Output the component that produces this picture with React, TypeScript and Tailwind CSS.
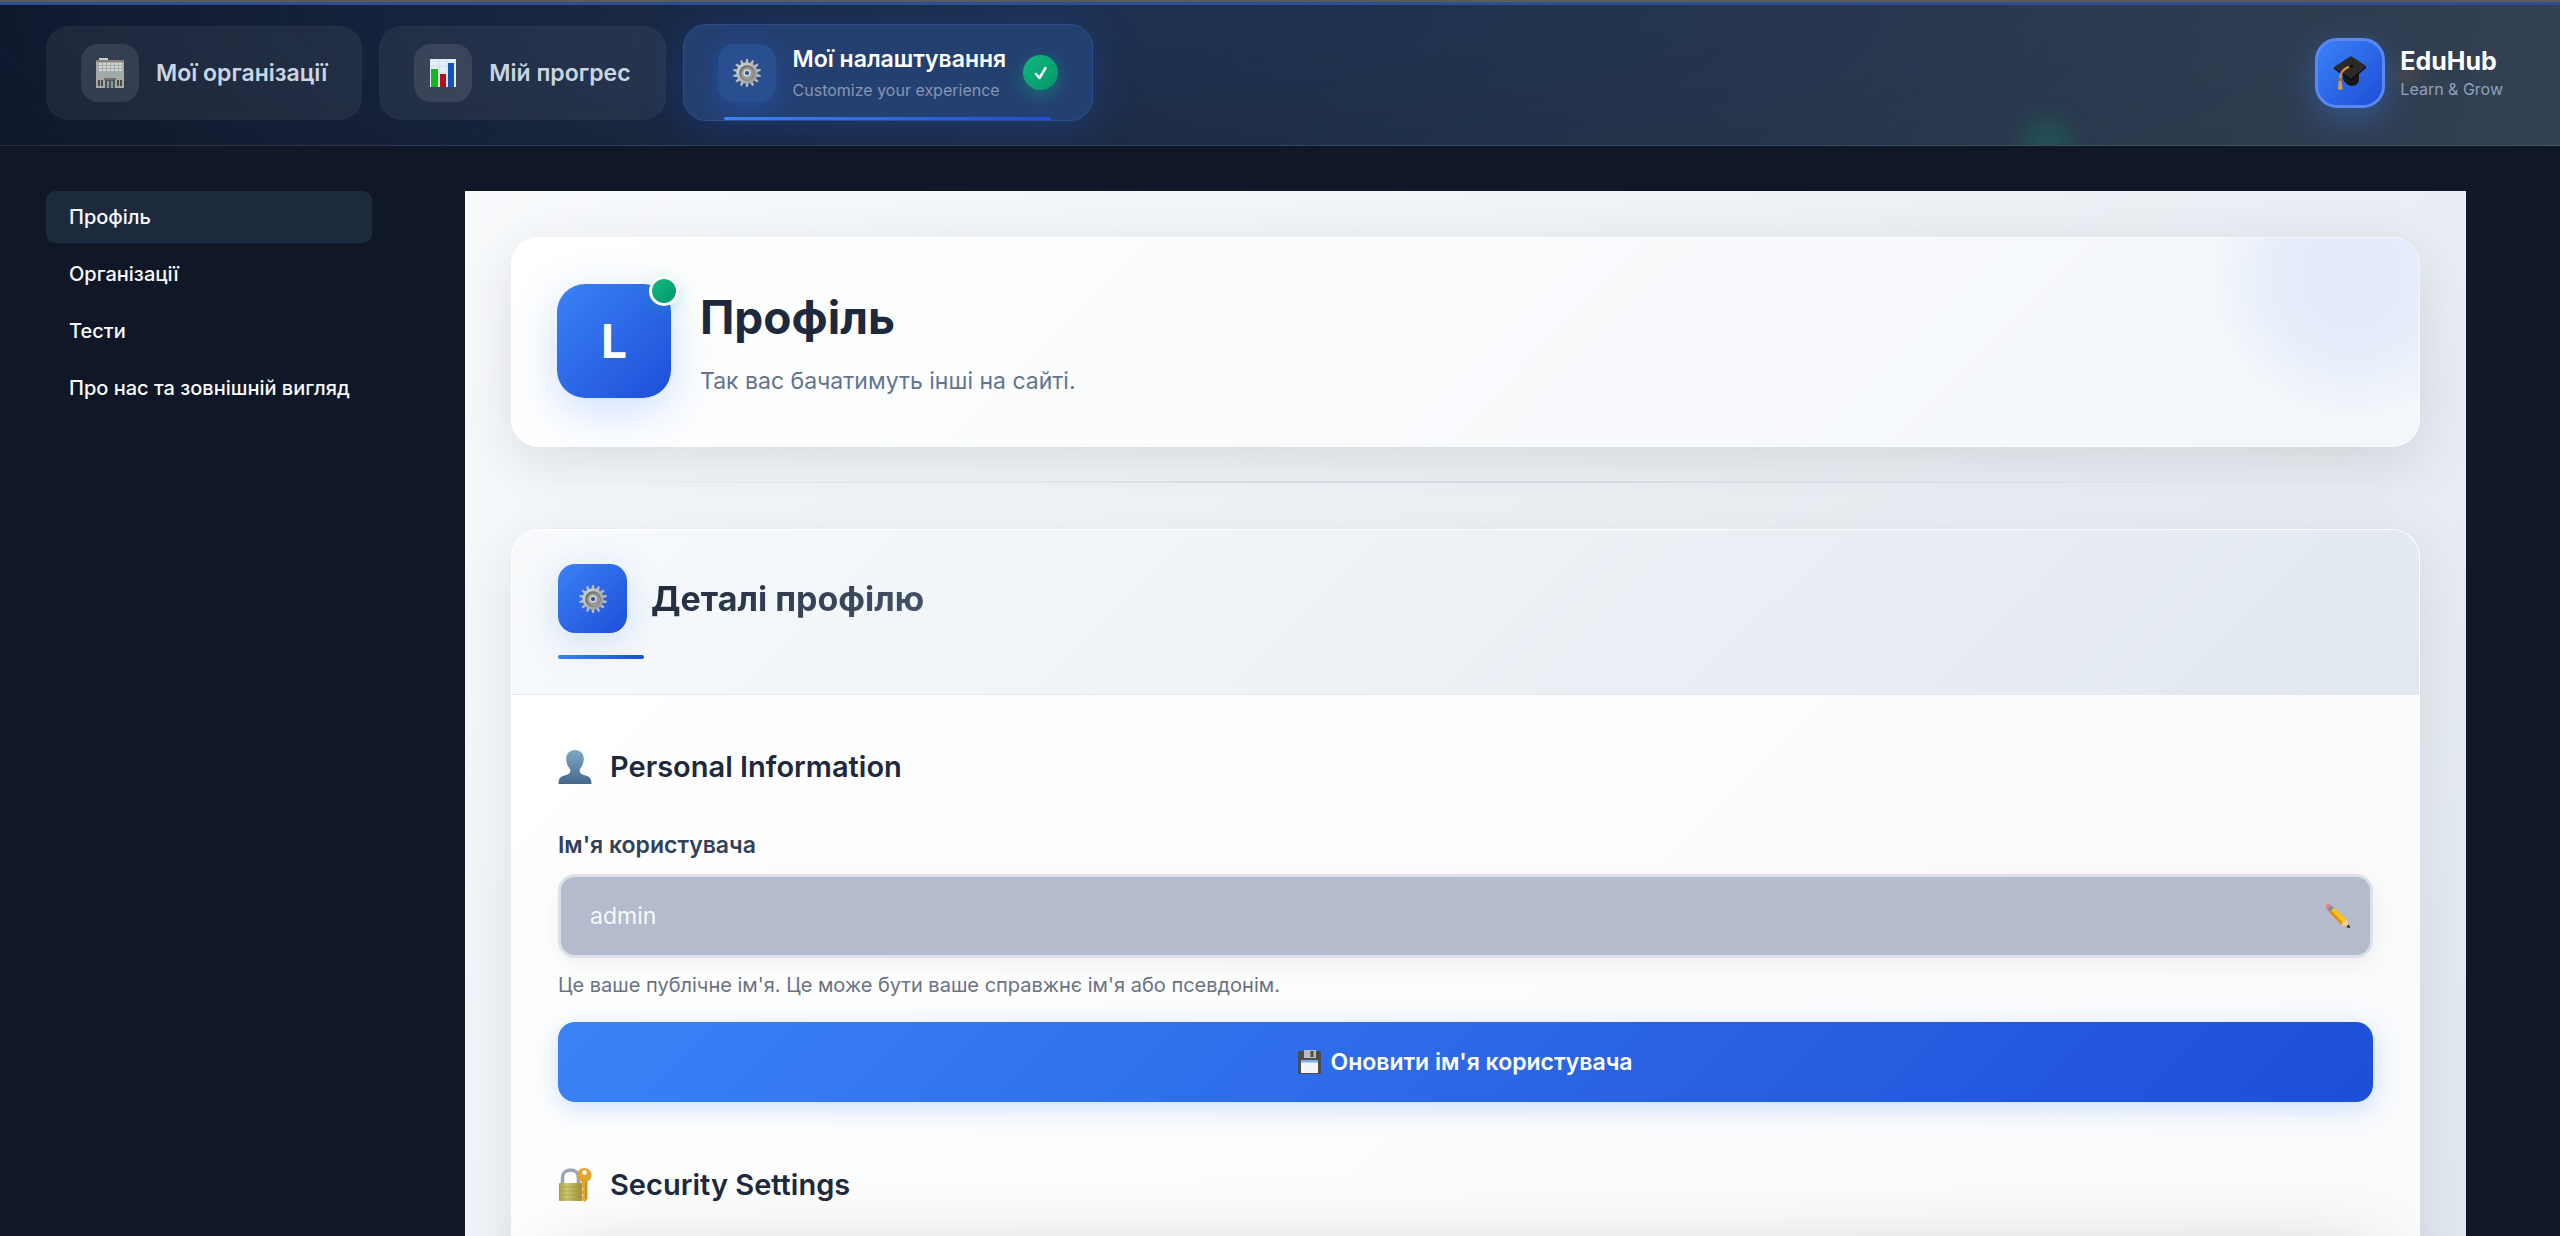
import type { ReactNode } from 'react';

function Building() {
  return (
    <svg viewBox="0 0 28 30" className="h-[30px] w-7" aria-hidden="true">
      <rect x="3" y="0" width="9" height="4" fill="#c9cccc" />
      <rect x="0" y="2" width="28" height="2" fill="#8d8078" />
      <rect x="0" y="4" width="28" height="26" fill="#a9aaa4" />
      {[5, 8, 11, 14, 17].map((y) =>
        [2, 6, 10, 14, 18, 22].map((x) => (
          <rect key={`${x}-${y}`} x={x + 1} y={y} width="3" height="2" fill={y < 13 ? '#c4dbe2' : '#93aab3'} />
        )),
      )}
      {[2, 5, 21, 24].map((x) => (
        <rect key={x} x={x} y="22" width="2" height="6" fill="#454a4c" />
      ))}
      <rect x="8" y="20" width="12" height="2" fill="#706d68" />
      <rect x="9" y="22" width="10" height="8" fill="#4b5555" />
      <rect x="11" y="23" width="2" height="7" fill="#8a9898" />
      <rect x="15" y="23" width="2" height="7" fill="#8a9898" />
    </svg>
  );
}

function BarChart() {
  return (
    <svg viewBox="0 0 26 28" className="h-7 w-[26px]" aria-hidden="true">
      <rect width="26" height="28" fill="#e3edf5" />
      <path d="M0 7h26M0 14h26M0 21h26M9 0v28M17 0v28" stroke="#d3dfe9" strokeWidth="1" />
      <rect x="1" y="10" width="7" height="18" fill="#14b81c" />
      <rect x="10" y="15" width="6" height="13" fill="#b80d1a" />
      <rect x="18" y="4" width="6" height="24" fill="#0d55bd" />
    </svg>
  );
}

function Gear() {
  const teeth = Array.from({ length: 14 }, (_, i) => (i * 360) / 14);
  return (
    <svg viewBox="0 0 28 28" className="size-7" aria-hidden="true">
      <defs>
        <linearGradient id="steel" x1="0" y1="0" x2="1" y2="1">
          <stop offset="0" stopColor="#d8d9d9" />
          <stop offset="1" stopColor="#8f908f" />
        </linearGradient>
      </defs>
      {teeth.map((a) => (
        <path key={a} d="M12.4 4.500 13 0h2l.6 4.500z" fill="#b8b9b9" transform={`rotate(${a} 14 14)`} />
      ))}
      <circle cx="14" cy="14" r="10.6" fill="url(#steel)" />
      <circle cx="14" cy="14" r="7.800" fill="#70716f" />
      <circle cx="14.500" cy="14.600" r="6.600" fill="#979896" />
      <circle cx="14" cy="14" r="3.800" fill="#d3d6d9" />
      <circle cx="14" cy="14" r="2.100" fill="#2f5193" />
    </svg>
  );
}

function GradCap() {
  return (
    <svg viewBox="0 0 34 34" className="size-[34px]" aria-hidden="true">
      <path d="M10 15v8c1 3 4 6 8 7 5 0 8-3 8-6v-9z" fill="#171716" />
      <path d="M18 0 1 11l17 12L33 10z" fill="#2b2a29" />
      <path d="M1 11v2l17 12 15-13v-2L18 23z" fill="#111" />
      <path d="M18 10C11 12 7 16 7 24" fill="none" stroke="#d9902f" strokeWidth="2.200" />
      <circle cx="7" cy="24" r="2" fill="#a86b22" />
      <path d="M6 25 5 33q2 1 4.500 0l-1-8z" fill="#e59a35" />
      <ellipse cx="18" cy="10.400" rx="2.200" ry="1.400" fill="#0b0b0b" />
    </svg>
  );
}

function Person() {
  return (
    <svg viewBox="0 0 34 34" className="size-[34px]" aria-hidden="true">
      <defs>
        <linearGradient id="bust" x1="0" y1="0" x2="0" y2="1">
          <stop offset="0" stopColor="#7fa8c6" />
          <stop offset="1" stopColor="#44688c" />
        </linearGradient>
      </defs>
      <path
        d="M17 0c5.500 0 9 3.800 8.800 9.300-.2 4.500-2 7.500-4 9.900-.6 3.400.8 5 5 6 4.500 1 6.700 3 6.700 8.800H.5c0-5.800 2.200-7.800 6.700-8.800 4.200-1 5.600-2.600 5-6-2-2.400-3.800-5.400-4-9.900C8 3.800 11.500 0 17 0z"
        fill="url(#bust)"
      />
    </svg>
  );
}

function LockKey() {
  return (
    <svg viewBox="0 0 34 34" className="size-[34px]" aria-hidden="true">
      <defs>
        <linearGradient id="brass" x1="0" y1="0" x2="1" y2="0">
          <stop offset="0" stopColor="#a89d4a" />
          <stop offset=".35" stopColor="#d2c872" />
          <stop offset="1" stopColor="#9a8a35" />
        </linearGradient>
      </defs>
      <path d="M4.500 16v-6c0-4.500 3-8 8-8s8 3.500 8 8v6" fill="none" stroke="#9aa6b3" strokeWidth="3.600" />
      <rect x="1" y="15" width="23" height="18" rx="1" fill="url(#brass)" />
      <path d="M1 19h23M1 23h23M1 27h23M1 31h23" stroke="#a59a4a" strokeWidth=".6" />
      <path d="M26 0c4.500 0 7.500 3 7.500 7 0 3-1.500 5.300-4 6.500V31l-2.500 3-3.500-2v-3l2-1.500-2-2v-3l2-1.500-2-2v-5.500c-2.500-1.200-4-3.500-4-6.500 0-4 2.500-7 6.500-7z" fill="#e3a52e" />
      <circle cx="26.500" cy="4.600" r="2.300" fill="#fff" />
      <path d="M28 14v17" stroke="#b67b1b" strokeWidth="1" />
    </svg>
  );
}

function Pencil() {
  return (
    <svg viewBox="0 0 26 26" className="size-[26px]" aria-hidden="true">
      <path d="M8.500 4.500 22 16.500 25.300 25 16.500 22.300 4 9z" fill="#fbc41c" />
      <path d="M4 9 16.500 22.300l2-2L6 7z" fill="#d9950f" />
      <path d="M22 16.500 25.300 25l-8.800-2.700c.8-2.800 2.700-4.800 5.500-5.800z" fill="#efcf9b" />
      <path d="m23.800 21.300 1.500 3.900-4.100-1.300z" fill="#2a2724" />
      <path d="M6 2.300 8.900 4.900 4.400 9.300 1.900 6.300z" fill="#84909c" />
      <path d="M5.800 2.200 2 6.300C.3 4.800.2 3 1.300 1.700 2.600.3 4.500.6 5.800 2.200z" fill="#f0807f" />
    </svg>
  );
}

function Floppy() {
  return (
    <svg viewBox="0 0 23 24" className="h-6 w-[23px]" aria-hidden="true">
      <path d="M0 1h22l1 1v22H1l-1-1z" fill="#4c4d50" />
      <rect x="6" y="0" width="12" height="8" fill="#b9bbbc" />
      <rect x="12.500" y="1" width="3" height="6" fill="#4c4d50" />
      <rect x="3" y="10" width="17" height="13" fill="#f3f5f7" />
      <rect x="3" y="10" width="17" height="2.500" fill="#79b2e6" />
    </svg>
  );
}

function Tab({ icon, label }: { icon: ReactNode; label: string }) {
  return (
    <a href="#" className="flex items-center gap-[17px] rounded-[23px] border border-white/[0.02] bg-white/[0.06] px-[34px] py-[17px]">
      <span className="flex size-[58px] items-center justify-center rounded-[17px] bg-white/10">{icon}</span>
      <span className="text-[23px] leading-[34px] font-semibold text-slate-300">{label}</span>
    </a>
  );
}

function SectionHeading({ icon, children }: { icon: ReactNode; children: ReactNode }) {
  return (
    <h3 className="flex items-center gap-[18px] text-[29px] leading-[48px] font-semibold text-slate-800">
      {icon}
      {children}
    </h3>
  );
}

const sideLinks = ['Профіль', 'Організації', 'Тести', 'Про нас та зовнішній вигляд'];

export default function App() {
  return (
    <div className="flex h-screen flex-col overflow-hidden bg-[#101726] font-['Inter','Noto_Sans',sans-serif]">
      <header className="relative flex shrink-0 items-center justify-between overflow-hidden border-b border-white/10 bg-[radial-gradient(ellipse_50%_180%_at_42%_10%,rgba(37,82,160,0.24),transparent),linear-gradient(100deg,#0f172a_0%,#1e293b_50%,#334155_100%)] py-6 pr-[57px] pl-[46px]">
        <div className="absolute inset-x-0 top-0 h-[5px] border-t-2 border-[#5a5a5f] bg-[#2c4f8f]" />
        <div className="absolute -bottom-6 left-[79%] size-[50px] rounded-full bg-emerald-500/20 blur-md" />
        <div className="absolute top-[62px] right-[140px] size-6 rounded-full bg-amber-600/15 blur-sm" />

        <nav className="relative flex items-center gap-[17px]">
          <Tab icon={<Building />} label="Мої організації" />
          <Tab icon={<BarChart />} label="Мій прогрес" />
          <a
            href="#"
            aria-current="page"
            className="relative flex items-center gap-[17px] rounded-[23px] border border-[#2d4f8e] bg-[#244071] px-[34px] py-[17px] shadow-[0_8px_44px_rgba(37,99,235,0.25)]"
          >
            <span className="flex size-[58px] items-center justify-center rounded-[17px] bg-[#2a4f91] shadow-[0_6px_24px_rgba(37,99,235,0.35)]">
              <Gear />
            </span>
            <span className="flex flex-col gap-px">
              <span className="text-[23px] leading-[34px] font-semibold text-white">Мої налаштування</span>
              <span className="text-[16px] leading-[26px] text-[#8795b3]">Customize your experience</span>
            </span>
            <span className="flex size-[35px] items-center justify-center rounded-full bg-[linear-gradient(135deg,#10b981,#059669)] shadow-[0_5px_16px_rgba(16,185,129,0.4)]">
              <svg viewBox="0 0 16 16" className="size-4" fill="none" stroke="#fff" strokeWidth="2.500" strokeLinecap="round" strokeLinejoin="round" aria-hidden="true">
                <path d="M3 9 6.500 13 12.500 3" />
              </svg>
            </span>
            <span className="absolute inset-x-[10%] bottom-0 h-[3px] rounded-full bg-[linear-gradient(90deg,#3b82f6,#1d4ed8)]" />
          </a>
        </nav>

        <a href="#" className="relative flex items-center gap-[15px]">
          <span className="flex size-[70px] items-center justify-center rounded-[22px] border-[3px] border-[#5a88f2] bg-[linear-gradient(135deg,#3b82f6,#1d4ed8)] shadow-[0_10px_34px_rgba(59,130,246,0.4)]">
            <GradCap />
          </span>
          <span className="flex flex-col">
            <span className="text-[25px] leading-[32px] font-bold text-white">EduHub</span>
            <span className="text-[16px] leading-[24px] text-slate-400">Learn &amp; Grow</span>
          </span>
        </a>
      </header>

      <div className="flex min-h-0 grow gap-[93px] pt-[45px] pr-[94px] pl-[46px]">
        <aside className="w-[326px] shrink-0">
          <nav className="flex flex-col gap-[5px]">
            {sideLinks.map((label, i) => (
              <a
                key={label}
                href="#"
                className={`rounded-[9px] px-[23px] text-[20px] leading-[52px] font-medium whitespace-nowrap text-slate-50 ${i === 0 ? 'bg-slate-800' : ''}`}
              >
                {label}
              </a>
            ))}
          </nav>
        </aside>

        <main className="min-w-0 grow overflow-hidden bg-[linear-gradient(135deg,#f8fafc,#e2e8f0)] px-[46px] pt-[46px]">
          <section className="relative rounded-[28px] bg-[linear-gradient(135deg,#ffffff,#f3f6fa)] shadow-[0_16px_60px_rgba(0,0,0,0.11)]">
            <div className="pointer-events-none absolute inset-0 overflow-hidden rounded-[28px]">
              <div className="absolute -top-[107px] -right-[74px] size-[290px] rounded-full bg-[radial-gradient(circle,rgba(59,110,246,0.09)_20%,rgba(59,120,246,0.07)_40%,transparent_70%)]" />
            </div>
            <div className="relative flex items-center gap-[29px] rounded-[28px] border border-white/60 px-[45px] pt-[46px] pb-12">
              <div className="relative flex size-[114px] shrink-0 items-center justify-center rounded-[28px] bg-[linear-gradient(135deg,#3b82f6,#1d4ed8)] text-[46px] font-bold text-white shadow-[0_12px_44px_rgba(59,130,246,0.25)]">
                L
                <span className="absolute -top-2 -right-2 size-[30px] rounded-full border-[3px] border-white bg-[linear-gradient(135deg,#10b981,#059669)] shadow-[0_4px_16px_rgba(16,185,129,0.25)]" />
              </div>
              <div className="flex flex-col gap-[14px]">
                <h1 className="text-[46px] leading-[66px] font-bold text-slate-800">Профіль</h1>
                <p className="text-[23px] leading-[34px] text-slate-500">Так вас бачатимуть інші на сайті.</p>
              </div>
            </div>
          </section>

          <div className="mt-[34px] mb-[46px] h-[2px] bg-[linear-gradient(90deg,transparent,#dbe0e8,transparent)]" />

          <section className="rounded-[28px] border border-white/60 bg-[linear-gradient(135deg,#ffffff,#f9fafc)] shadow-[0_12px_60px_rgba(0,0,0,0.09)]">
            <div className="rounded-t-[27px] border-b border-slate-200 bg-[linear-gradient(135deg,#f8fafc,#e2e8f0)] px-[46px] pt-[34px] pb-[35px]">
              <div className="flex items-center gap-6">
                <span className="flex size-[69px] items-center justify-center rounded-[17px] bg-[linear-gradient(135deg,#3b82f6,#1d4ed8)] shadow-[0_8px_36px_rgba(59,130,246,0.22)]">
                  <Gear />
                </span>
                <h2 className="bg-[linear-gradient(135deg,#1e293b,#475569)] bg-clip-text text-[34px] leading-[51px] font-bold text-transparent">
                  Деталі профілю
                </h2>
              </div>
              <div className="mt-[22px] h-1 w-[86px] rounded-full bg-[linear-gradient(90deg,#3b82f6,#1d4ed8)]" />
            </div>

            <div className="px-[46px] pt-12">
              <SectionHeading icon={<Person />}>Personal Information</SectionHeading>

              <label htmlFor="username" className="mt-[37px] block text-[23px] leading-[34px] font-semibold text-slate-700">
                Ім'я користувача
              </label>
              <div className="relative mt-3">
                <input
                  id="username"
                  type="text"
                  defaultValue="admin"
                  className="block h-[84px] w-full rounded-[17px] border-[3px] border-[#dce1e9] bg-[#b3bbcc] px-[29px] text-[23px] text-slate-50 shadow-[0_6px_22px_rgba(0,0,0,0.06)] outline-none"
                />
                <span className="pointer-events-none absolute inset-y-0 right-[22px] flex items-center">
                  <Pencil />
                </span>
              </div>
              <p className="mt-3 text-[20px] leading-[30px] text-gray-500">
                Це ваше публічне ім'я. Це може бути ваше справжнє ім'я або псевдонім.
              </p>
              <button
                type="button"
                className="mt-[22px] flex h-20 w-full items-center justify-center gap-[9px] rounded-[17px] bg-[linear-gradient(135deg,#3b82f6,#1d4ed8)] text-[23px] font-semibold text-white shadow-[0_6px_24px_rgba(59,130,246,0.25)]"
              >
                <Floppy />
                Оновити ім'я користувача
              </button>

              <div className="pt-[59px]">
                <SectionHeading icon={<LockKey />}>Security Settings</SectionHeading>
                <div className="mt-[56px] h-24 rounded-[23px] bg-white shadow-[0_0_80px_rgba(0,0,0,0.26)]" />
              </div>
            </div>
          </section>
        </main>
      </div>
    </div>
  );
}
